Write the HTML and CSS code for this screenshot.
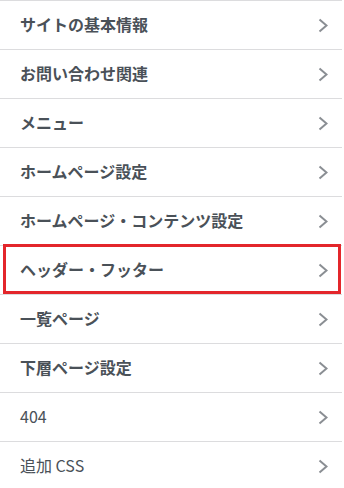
FILE: index.html
```html
<!DOCTYPE html>
<html lang="ja">
<head>
<meta charset="utf-8">
<link rel="stylesheet" href="styles.css">
</head>
<body>
<div class="panel">
  <ul class="menu">
    <li class="row bold"><span class="label">サイトの基本情報</span><svg class="chev" width="10" height="15" viewBox="0 0 10 15"><polyline points="1.5,1.5 8.5,7.5 1.5,13.5"/></svg></li>
    <li class="row bold"><span class="label">お問い合わせ関連</span><svg class="chev" width="10" height="15" viewBox="0 0 10 15"><polyline points="1.5,1.5 8.5,7.5 1.5,13.5"/></svg></li>
    <li class="row bold"><span class="label">メニュー</span><svg class="chev" width="10" height="15" viewBox="0 0 10 15"><polyline points="1.5,1.5 8.5,7.5 1.5,13.5"/></svg></li>
    <li class="row bold"><span class="label">ホームページ設定</span><svg class="chev" width="10" height="15" viewBox="0 0 10 15"><polyline points="1.5,1.5 8.5,7.5 1.5,13.5"/></svg></li>
    <li class="row bold"><span class="label">ホームページ・コンテンツ設定</span><svg class="chev" width="10" height="15" viewBox="0 0 10 15"><polyline points="1.5,1.5 8.5,7.5 1.5,13.5"/></svg></li>
    <li class="row bold"><span class="label">ヘッダー・フッター</span><svg class="chev" width="10" height="15" viewBox="0 0 10 15"><polyline points="1.5,1.5 8.5,7.5 1.5,13.5"/></svg></li>
    <li class="row bold"><span class="label">一覧ページ</span><svg class="chev" width="10" height="15" viewBox="0 0 10 15"><polyline points="1.5,1.5 8.5,7.5 1.5,13.5"/></svg></li>
    <li class="row bold"><span class="label">下層ページ設定</span><svg class="chev" width="10" height="15" viewBox="0 0 10 15"><polyline points="1.5,1.5 8.5,7.5 1.5,13.5"/></svg></li>
    <li class="row"><span class="label">404</span><svg class="chev" width="10" height="15" viewBox="0 0 10 15"><polyline points="1.5,1.5 8.5,7.5 1.5,13.5"/></svg></li>
    <li class="row"><span class="label">追加 CSS</span><svg class="chev" width="10" height="15" viewBox="0 0 10 15"><polyline points="1.5,1.5 8.5,7.5 1.5,13.5"/></svg></li>
  </ul>
  <div class="highlight"></div>
</div>
</body>
</html>
```

FILE: styles.css
```css
html, body {
  margin: 0;
  padding: 0;
  background: #fff;
}
body {
  font-family: "Noto Sans CJK JP", "Noto Sans", sans-serif;
  color: #4a5158;
  overflow: hidden;
}
.panel {
  position: relative;
  width: 342px;
}
.menu {
  list-style: none;
  margin: 0;
  padding: 0;
  border-top: 1px solid #dcdcde;
}
.row {
  display: flex;
  align-items: center;
  justify-content: space-between;
  height: 48px;
  border-bottom: 1px solid #dcdcde;
  padding: 0 14px 0 20px;
  font-size: 16px;
  font-weight: 400;
}
.row.bold {
  font-weight: 700;
}
.label {
  line-height: 1;
  padding-bottom: 2px;
}
.chev {
  display: block;
  fill: none;
  stroke: #8a8e93;
  stroke-width: 2;
}
.highlight {
  position: absolute;
  left: 3px;
  top: 244px;
  width: 332px;
  height: 44px;
  border: 3px solid #e3262b;
  pointer-events: none;
}
```
